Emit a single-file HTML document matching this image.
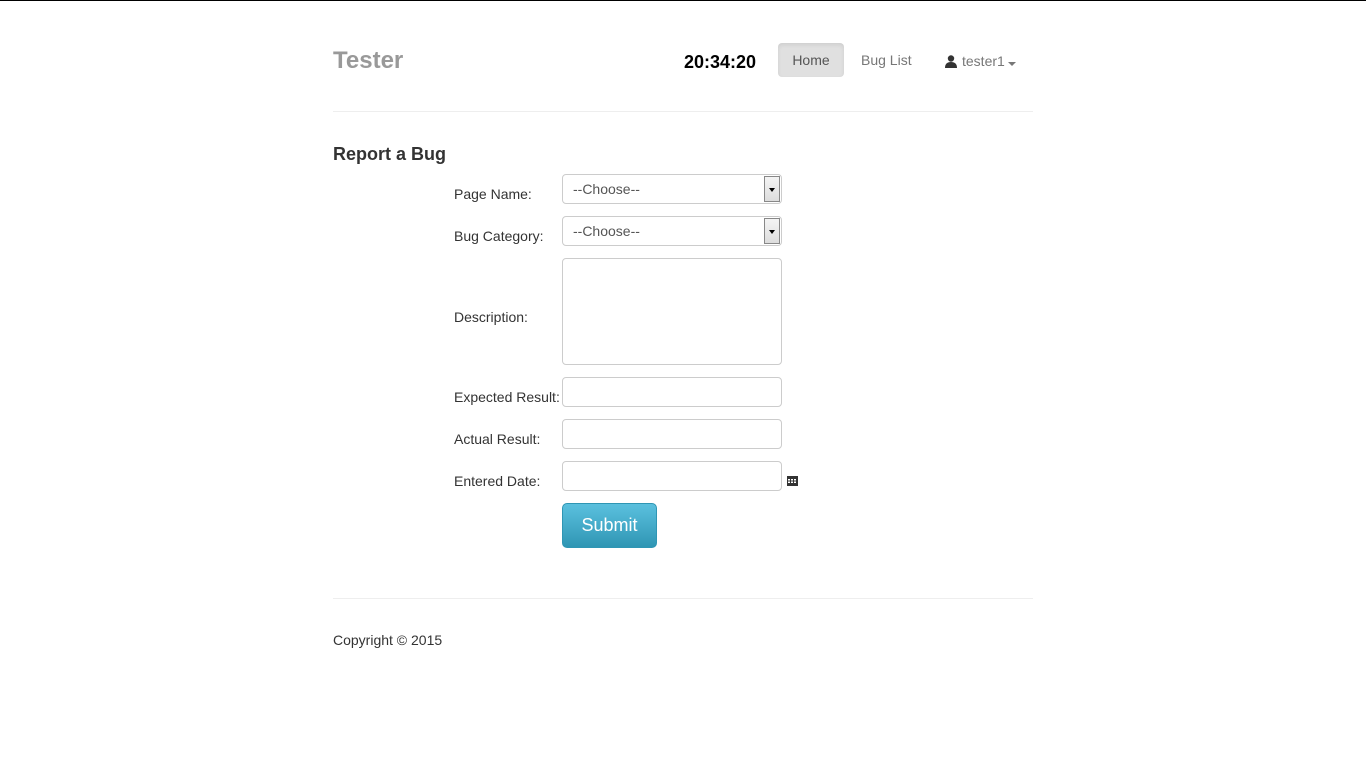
<!DOCTYPE html>
<html><head><meta charset="utf-8"><style>
*{box-sizing:border-box}
body{margin:0;width:1366px;height:768px;background:#fff;font-family:"Liberation Sans",sans-serif;font-size:14px;color:#333;border-top:1px solid #000;position:relative;overflow:hidden}
.a{position:absolute}
.lbl{position:absolute;left:454px;font-size:14px;color:#333}
.inp{position:absolute;left:562px;width:220px;height:30px;border:1px solid #ccc;border-radius:4px;background:#fff}
.sel{position:absolute;left:562px;width:220px;height:30px;border:1px solid #ccc;border-radius:4px;background:#fff;font-size:14px;color:#555;padding:6px 10px}
.arr{position:absolute;right:1px;top:1px;width:16px;height:26px;border:1px solid #888;background:linear-gradient(#f4f4f4,#ddd)}
.arr:after{content:"";position:absolute;left:4px;top:11px;border-left:3px solid transparent;border-right:3px solid transparent;border-top:4px solid #000}
</style></head><body>
<div class="a" style="left:333px;top:46px;font-size:24px;font-weight:bold;color:#999">Tester</div>
<div class="a" style="left:684px;top:51px;font-size:18px;font-weight:bold;color:#000">20:34:20</div>
<div class="a" style="left:778px;top:42px;width:66px;height:34px;background:#e0e0e0;border-radius:4px;box-shadow:inset 0 2px 4px rgba(0,0,0,.08);color:#555;text-align:center;line-height:34px">Home</div>
<div class="a" style="left:861px;top:51px;color:#777">Bug List</div>
<svg class="a" style="left:945px;top:54px" width="12" height="13" viewBox="0 0 12 13"><circle cx="6" cy="3.5" r="3.2" fill="#333"/><path d="M0 13 Q0 7 6 7 Q12 7 12 13Z" fill="#333"/></svg>
<div class="a" style="left:962px;top:52px;color:#777">tester1</div>
<div class="a" style="left:1008px;top:61px;border-left:4px solid transparent;border-right:4px solid transparent;border-top:4px solid #777"></div>
<div class="a" style="left:333px;top:110px;width:700px;border-top:1px solid #eee"></div>
<div class="a" style="left:333px;top:143px;font-size:18px;font-weight:bold;color:#333">Report a Bug</div>
<div class="lbl" style="top:185px">Page Name:</div>
<div class="sel" style="top:173px">--Choose--<div class="arr"></div></div>
<div class="lbl" style="top:227px">Bug Category:</div>
<div class="sel" style="top:215px">--Choose--<div class="arr"></div></div>
<div class="lbl" style="top:308px">Description:</div>
<div class="inp" style="top:257px;height:107px"></div>
<div class="lbl" style="top:388px">Expected Result:</div>
<div class="inp" style="top:376px"></div>
<div class="lbl" style="top:430px">Actual Result:</div>
<div class="inp" style="top:418px"></div>
<div class="lbl" style="top:472px">Entered Date:</div>
<div class="inp" style="top:460px"></div>
<svg class="a" style="left:787px;top:474px" width="11" height="11" viewBox="0 0 11 11"><rect x="0" y="1" width="11" height="10" fill="#333"/><g fill="#fff"><rect x="1" y="4" width="2" height="1.5"/><rect x="4" y="4" width="2" height="1.5"/><rect x="7" y="4" width="2" height="1.5"/><rect x="1" y="6.5" width="2" height="1.5"/><rect x="4" y="6.5" width="2" height="1.5"/><rect x="7" y="6.5" width="2" height="1.5"/></g></svg>
<div class="a" style="left:562px;top:502px;width:95px;height:45px;border-radius:5px;background:linear-gradient(#5bc0de,#2f96b4);border:1px solid #2f96b4;color:#fff;font-size:18px;text-align:center;line-height:43px">Submit</div>
<div class="a" style="left:333px;top:597px;width:700px;border-top:1px solid #eee"></div>
<div class="a" style="left:333px;top:631px">Copyright © 2015</div>
</body></html>
